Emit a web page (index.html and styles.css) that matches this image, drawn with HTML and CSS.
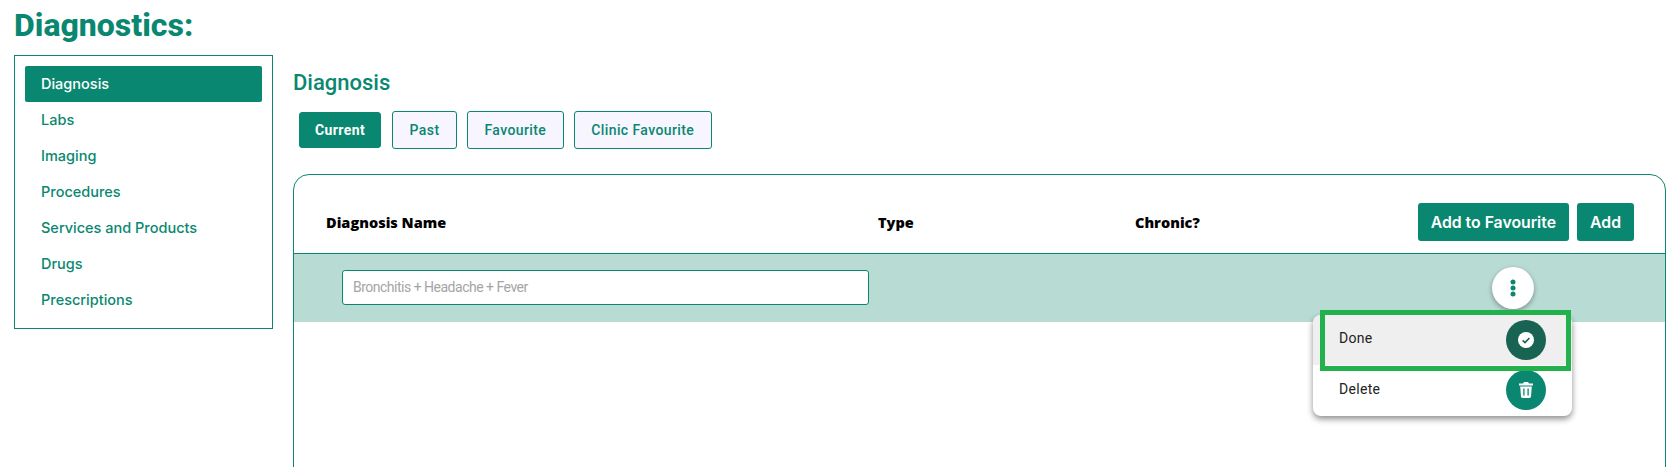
FILE: index.html
```html
<!DOCTYPE html>
<html lang="en">
<head>
    <meta charset="UTF-8">
    <title>Diagnostics</title>
    <link rel="stylesheet" href="styles.css">
</head>
<body>
<h1 class="page-title">Diagnostics:</h1>
<div class="layout">
    <ul class="side-nav">
        <li class="active">Diagnosis</li>
        <li>Labs</li>
        <li>Imaging</li>
        <li>Procedures</li>
        <li>Services and Products</li>
        <li>Drugs</li>
        <li>Prescriptions</li>
    </ul>
    <div class="main">
        <h2 class="main-title">Diagnosis</h2>
        <div class="tabs">
            <button class="tab tab-active">Current</button>
            <button class="tab">Past</button>
            <button class="tab">Favourite</button>
            <button class="tab">Clinic Favourite</button>
        </div>
        <div class="card">
            <div class="card-head">
                <span class="col col-name">Diagnosis Name</span>
                <span class="col col-type">Type</span>
                <span class="col col-chronic">Chronic?</span>
                <button class="btn">Add to Favourite</button>
                <button class="btn">Add</button>
            </div>
            <div class="card-row">
                <input class="name-input" type="text" placeholder="Bronchitis + Headache + Fever">
                <button class="kebab">
                    <svg width="6" height="18" viewBox="0 0 6 18"><circle cx="3" cy="3" r="2.500"/><circle cx="3" cy="9" r="2.500"/><circle cx="3" cy="15" r="2.500"/></svg>
                </button>
                <div class="menu">
                    <div class="menu-item menu-done">
                        <span class="menu-label">Done</span>
                        <span class="menu-icon icon-dark">
                            <svg width="16" height="16" viewBox="0 0 16 16"><circle cx="8" cy="8" r="8" fill="#fff"/><path d="M4.600 8.300l2.400 2.300 4.400-4.600" fill="none" stroke="#196353" stroke-width="1.600"/></svg>
                        </span>
                    </div>
                    <div class="menu-item">
                        <span class="menu-label">Delete</span>
                        <span class="menu-icon">
                            <svg width="14" height="16" viewBox="0 0 14 16"><path fill="#fff" d="M5 0h4l1 1.500h4V3.400H0V1.500h4zM1.200 4.500h11.600l-.8 10.100A1.500 1.500 0 0 1 10.500 16H3.500A1.500 1.500 0 0 1 2 14.600z"/><path d="M4.900 6.500v7M9.100 6.500v7" stroke="#0a8770" stroke-width="1.300"/></svg>
                        </span>
                    </div>
                </div>
                <div class="highlight"></div>
            </div>
        </div>
    </div>
</div>
</body>
</html>
```

FILE: styles.css
```css
*{
    margin: 0px;
    padding: 0px;
    box-sizing: border-box;
}
html, body{
    height: 467px;
    overflow: hidden;
}
body{
    background: #fff;
    padding-left: 14px;
    font-family: "Roboto", sans-serif;
    color: #0a8770;
}
.page-title{
    font-size: 32px;
    font-weight: 800;
    line-height: 34px;
    padding-top: 8px;
    height: 55px;
}
.layout{
    display: flex;
    gap: 20px;
    padding-right: 5px;
    height: 412px;
}
.side-nav{
    list-style-type: none;
    width: 259px;
    height: 274px;
    border: 1px solid #0a8770;
    padding: 10px;
    flex-shrink: 0;
    font-family: "Inter", sans-serif;
    font-size: 14.5px;
    font-weight: 500;
}
.side-nav li{
    height: 36px;
    line-height: 36px;
    padding-left: 16px;
    border-radius: 2px;
}
.side-nav li.active{
    background: #0a8770;
    color: #fff;
}
.main{
    flex: 1;
}
.main-title{
    font-size: 22px;
    font-weight: 500;
    line-height: 24px;
    padding-top: 16px;
    height: 56px;
}
.tabs{
    display: flex;
    align-items: center;
    gap: 10px;
    height: 38px;
    padding-left: 6px;
}
.tab{
    height: 38px;
    padding: 0px 16.500px;
    background: #f7f5ff;
    border: 1px solid #0a8770;
    border-radius: 3px;
    color: #0a8770;
    font-family: "Roboto", sans-serif;
    font-size: 14px;
    font-weight: 500;
    letter-spacing: 0.4px;
}
.tab-active{
    height: 36px;
    padding: 0px 15px;
    background: #0a8770;
    color: #fff;
    font-weight: 700;
    margin-right: 1px;
}
.card{
    margin-top: 25px;
    height: 320px;
    border: 1px solid #0a8770;
    border-radius: 16px;
}
.card-head{
    display: flex;
    align-items: center;
    height: 79px;
    border-bottom: 1px solid #0a8770;
    padding: 16px 31px 0px 0px;
    gap: 8px;
}
.col{
    color: #000;
    font-family: "Open Sans", sans-serif;
    font-size: 14.500px;
    font-weight: 800;
}
.col-name{
    margin-left: 32px;
    width: 544px;
}
.col-type{
    width: 249px;
}
.col-chronic{
    flex: 1;
}
.btn{
    height: 38px;
    padding: 0px 13px;
    background: #0a8770;
    border: none;
    border-radius: 3px;
    color: #fff;
    font-family: "Inter", sans-serif;
    font-size: 15.800px;
    font-weight: 600;
}
.card-row{
    position: relative;
    display: flex;
    align-items: center;
    justify-content: space-between;
    height: 68px;
    background: #b8dbd4;
    padding: 0px 131px 0px 48px;
}
.name-input{
    width: 527px;
    height: 35px;
    margin-bottom: 2px;
    padding-left: 10px;
    border: 1px solid #0a8770;
    border-radius: 3px;
    font-family: "Roboto", sans-serif;
    font-size: 14px;
    letter-spacing: -0.5px;
    background: #fff;
}
.name-input::placeholder{
    color: #a5a5a5;
}
.kebab{
    width: 42px;
    height: 42px;
    border: none;
    border-radius: 50%;
    background: #fff;
    box-shadow: 0px 2px 5px rgba(0, 0, 0, 0.35);
    display: flex;
    align-items: center;
    justify-content: center;
    fill: #0a8770;
}
.menu{
    position: absolute;
    top: 61px;
    left: 1019px;
    width: 259px;
    height: 101px;
    background: #fff;
    border-radius: 8px;
    box-shadow: 0px 3px 6px rgba(0, 0, 0, 0.45);
    color: #222;
    font-size: 14px;
    letter-spacing: 0.3px;
}
.menu-item{
    display: flex;
    align-items: center;
    justify-content: space-between;
    height: 50px;
    padding: 0px 26px;
}
.menu-label{
    padding-bottom: 3px;
}
.menu-done{
    background: #efefef;
    border-radius: 8px 8px 0px 0px;
}
.menu-done .menu-label{
    padding-bottom: 5px;
}
.menu-icon{
    width: 40px;
    height: 40px;
    border-radius: 50%;
    background: #0a8770;
    display: flex;
    align-items: center;
    justify-content: center;
}
.icon-dark{
    background: #196353;
}
.highlight{
    position: absolute;
    top: 56px;
    left: 1026px;
    width: 251px;
    height: 61px;
    border: 5px solid #22b14c;
}
```
